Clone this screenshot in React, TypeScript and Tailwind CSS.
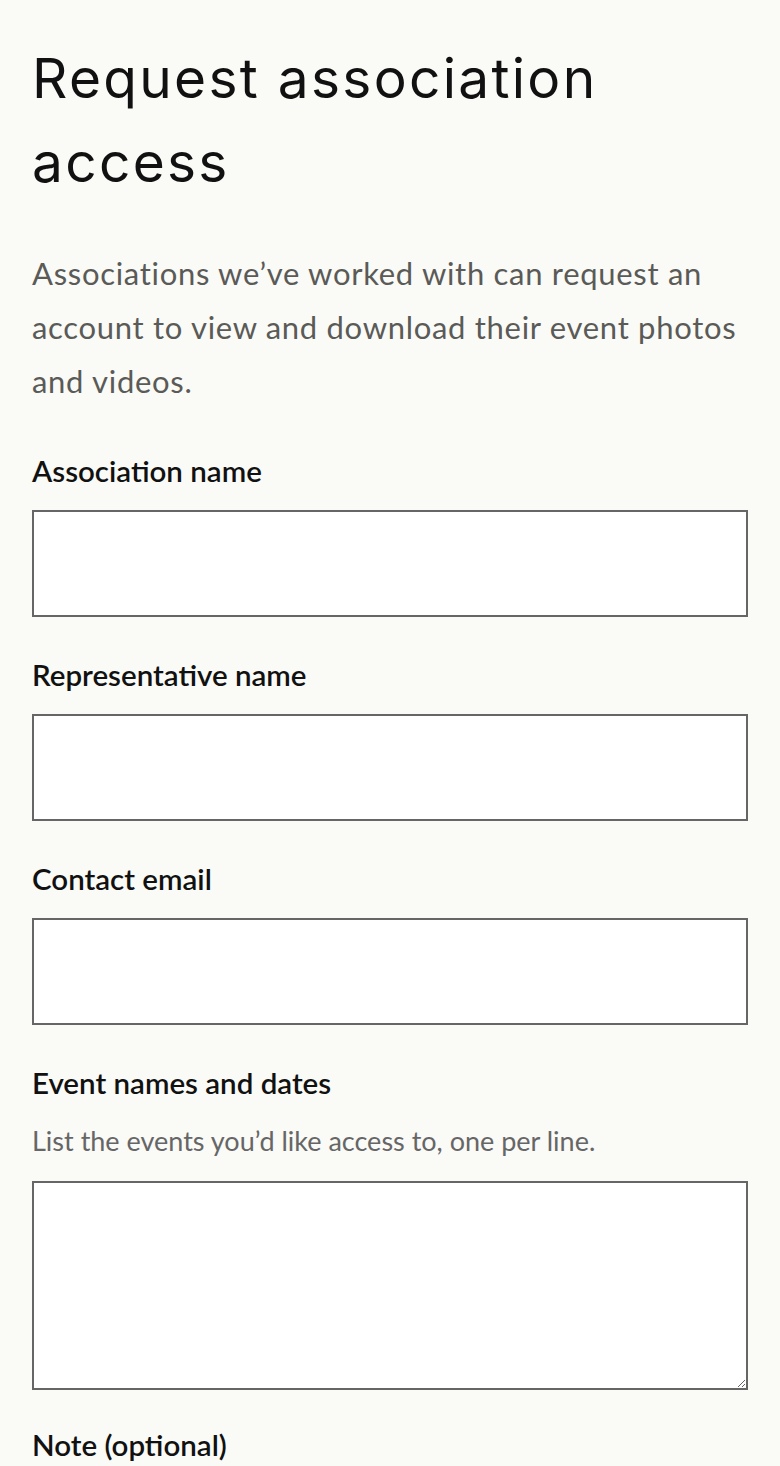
import React from 'react';

const fields = [
  { id: 'association', label: 'Association name', type: 'text' },
  { id: 'representative', label: 'Representative name', type: 'text' },
  { id: 'email', label: 'Contact email', type: 'email' },
];

const labelClass =
  "block font-['Lato',sans-serif] text-[29.5px] leading-[40px] font-semibold text-[#111111]";
const boxClass =
  'block w-full bg-white border-2 border-[#666666] rounded-none outline-none';

export default function App() {
  return (
    <main className="min-h-screen bg-[#fafaf7] px-[32px] pt-[36px] pb-10">
      <h1 className="font-['Inter',sans-serif] text-[55px] leading-[84px] font-normal text-[#111111] tracking-[2.3px]">
        Request association access
      </h1>
      <p className="mt-[42px] font-['Lato',sans-serif] text-[31px] leading-[54px] tracking-[0.7px] text-[#5a5a57]">
        Associations we’ve worked with can request an account to view and download their event photos and videos.
      </p>

      <form className="mt-[43px]" onSubmit={(e) => e.preventDefault()}>
        {fields.map((f) => (
          <div key={f.id} className="mb-[38px]">
            <label htmlFor={f.id} className={labelClass}>
              {f.label}
            </label>
            <input id={f.id} type={f.type} className={`${boxClass} mt-[19px] h-[107px]`} />
          </div>
        ))}

        <div className="mb-[35px]">
          <label htmlFor="events" className={labelClass}>
            Event names and dates
          </label>
          <p className="mt-[20px] font-['Lato',sans-serif] text-[27px] leading-[36px] text-[#666666]">
            List the events you’d like access to, one per line.
          </p>
          <textarea id="events" className={`${boxClass} mt-[22px] h-[209px] resize-y`} />
        </div>

        <div>
          <label htmlFor="note" className={labelClass}>
            Note (optional)
          </label>
          <textarea id="note" className={`${boxClass} mt-[19px] h-[209px] resize-y`} />
        </div>
      </form>
    </main>
  );
}
